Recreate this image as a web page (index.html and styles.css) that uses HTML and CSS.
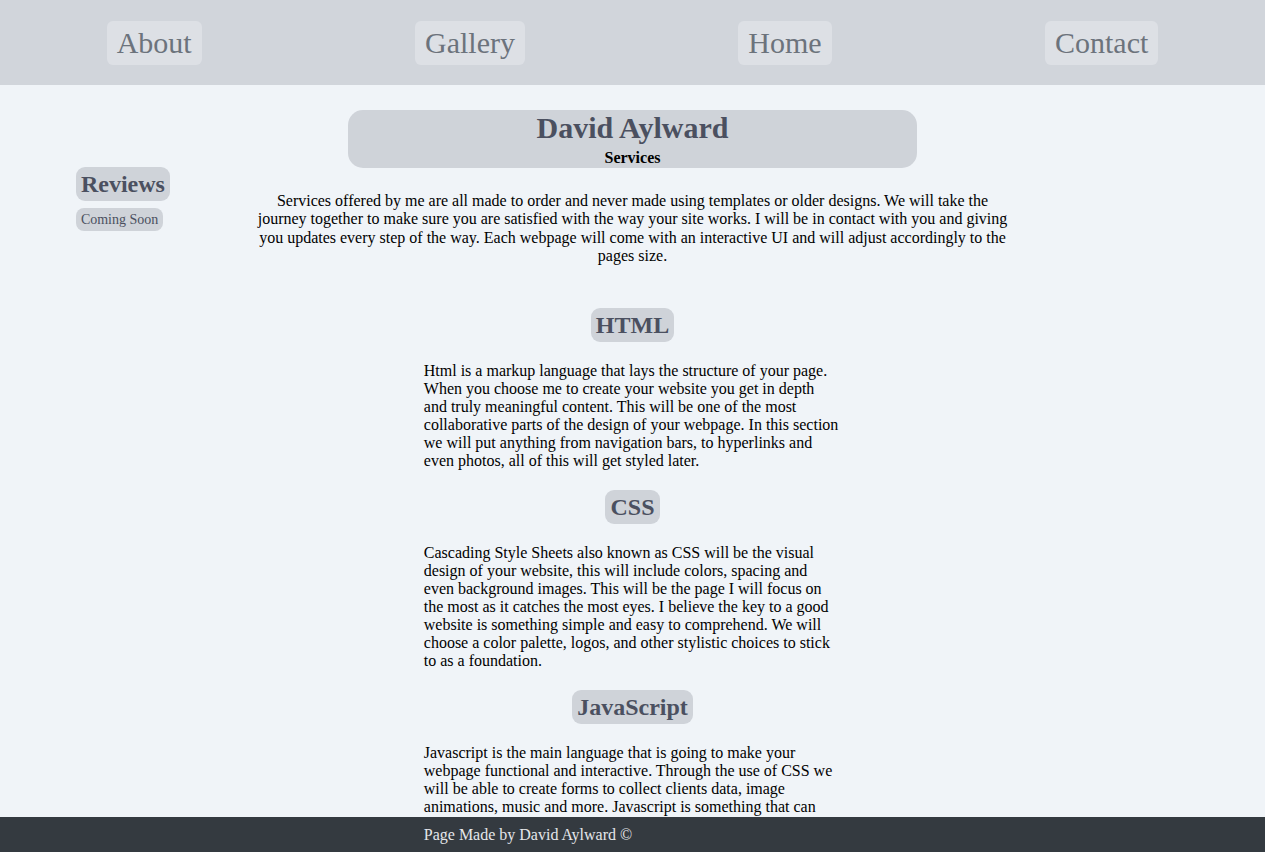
FILE: index.html
```html
<!DOCTYPE html>
<html lang="en">
<head>
<meta charset="utf-8">
<title>Services - David Aylward</title>
<link rel="stylesheet" href="styles.css">
</head>
<body>
<nav class="topnav">
  <a class="nav-link" href="#">About</a>
  <a class="nav-link" href="#">Gallery</a>
  <a class="nav-link" href="#">Home</a>
  <a class="nav-link" href="#">Contact</a>
</nav>
<main class="page">
  <aside class="sidebar">
    <h2 class="pill pill-lg">Reviews</h2>
    <span class="pill pill-sm">Coming Soon</span>
  </aside>
  <div class="content">
    <header class="title-box">
      <h1 class="title">David Aylward</h1>
      <h4 class="subtitle">Services</h4>
    </header>
    <p class="intro">Services offered by me are all made to order and never made using templates or older designs. We will take the journey together to make sure you are satisfied with the way your site works. I will be in contact with you and giving you updates every step of the way. Each webpage will come with an interactive UI and will adjust accordingly to the pages size.</p>
    <div class="sections">
      <h2 class="pill pill-lg section-title">HTML</h2>
      <p class="section-text">Html is a markup language that lays the structure of your page. When you choose me to create your website you get in depth and truly meaningful content. This will be one of the most collaborative parts of the design of your webpage. In this section we will put anything from navigation bars, to hyperlinks and even photos, all of this will get styled later.</p>
      <h2 class="pill pill-lg section-title">CSS</h2>
      <p class="section-text">Cascading Style Sheets also known as CSS will be the visual design of your website, this will include colors, spacing and even background images. This will be the page I will focus on the most as it catches the most eyes. I believe the key to a good website is something simple and easy to comprehend. We will choose a color palette, logos, and other stylistic choices to stick to as a foundation.</p>
      <h2 class="pill pill-lg section-title">JavaScript</h2>
      <p class="section-text">Javascript is the main language that is going to make your webpage functional and interactive. Through the use of CSS we will be able to create forms to collect clients data, image animations, music and more. Javascript is something that can take your website to the next level and make it truly stand out from the rest of the websites you will see online.</p>
    </div>
  </div>
  <div class="spacer"></div>
</main>
<footer class="footer">
  <div class="footer-inner">Page Made by David Aylward ©</div>
</footer>
</body>
</html>
```
FILE: styles.css
```css
* { box-sizing: border-box; }

html, body {
  margin: 0;
  padding: 0;
}

body {
  background: #f0f4f8;
  color: #000;
  font-family: "Liberation Serif", "Times New Roman", serif;
  font-size: 16px;
  padding-bottom: 60px;
}

.topnav {
  height: 85px;
  background: #d1d5db;
  display: flex;
  justify-content: space-around;
  align-items: center;
}

.nav-link {
  font-size: 30px;
  color: #6c737c;
  text-decoration: none;
  background: #dde0e5;
  padding: 5px 10px;
  border-radius: 6px;
  line-height: 34px;
}

.page {
  display: flex;
  padding-top: 25px;
}

.sidebar {
  width: 20vw;
  flex: none;
  padding-left: 6vw;
  padding-top: 57px;
  display: flex;
  flex-direction: column;
  align-items: flex-start;
  gap: 7px;
}

.content {
  width: 60vw;
  flex: none;
}

.spacer {
  width: 20vw;
  flex: none;
}

.pill {
  background: #cfd3d9;
  color: #4b5060;
  font-weight: bold;
}

.pill-lg {
  font-size: 24px;
  line-height: 28px;
  padding: 3px 5px;
  border-radius: 9px;
  margin: 0;
}

.pill-sm {
  font-size: 14px;
  font-weight: normal;
  line-height: 17px;
  padding: 3px 5px;
  border-radius: 8px;
}

.title-box {
  width: 45vw;
  margin: 0 auto;
  background: #cfd3d9;
  border-radius: 15px;
  text-align: center;
  padding: 0 0 1px;
}

.title {
  margin: 0;
  font-size: 30px;
  line-height: 35px;
  color: #4b5060;
}

.subtitle {
  margin: 3px 0 0;
  font-size: 16px;
  line-height: 19px;
  color: #000;
}

.intro {
  margin: 24px 0 0;
  text-align: center;
  line-height: 18.3px;
}

.sections {
  width: 33vw;
  margin: 43px auto 0;
}

.section-title {
  width: fit-content;
  margin: 20px auto;
}

.sections .section-title:first-child {
  margin-top: 0;
}

.section-text {
  margin: 16px 0;
  line-height: 18px;
}

.footer {
  position: fixed;
  left: 0;
  right: 0;
  bottom: 0;
  height: 35px;
  background: #343a40;
  color: #e5e7eb;
  padding: 8px 0;
}

.footer-inner {
  width: 33vw;
  margin: 0 auto;
  line-height: 19px;
}
```
